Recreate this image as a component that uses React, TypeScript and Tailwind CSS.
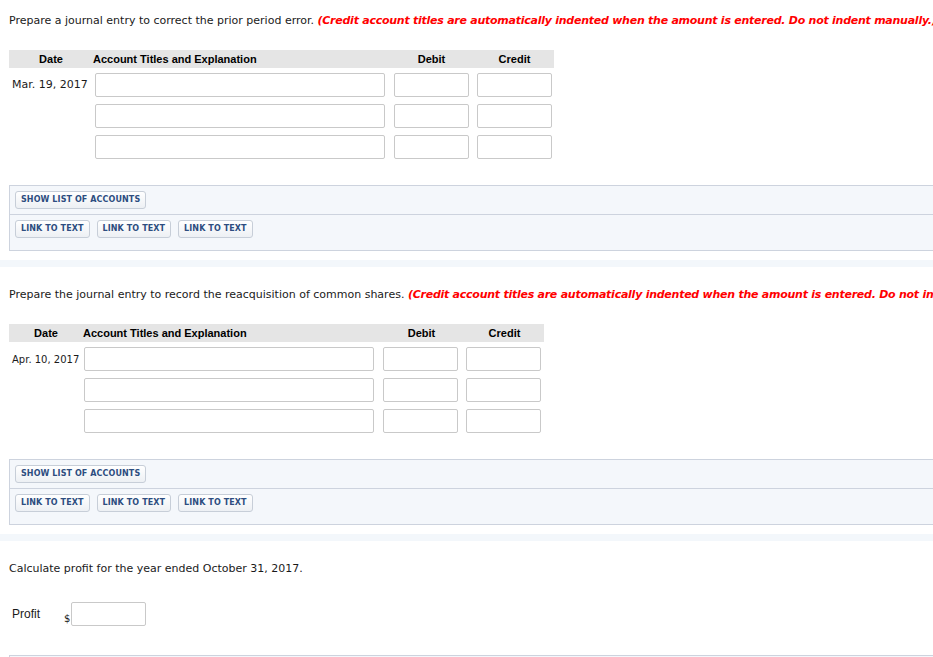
import React from "react";

const Btn = ({ children }: { children: React.ReactNode }) => (
  <button className="h-[18px] px-[5px] rounded-[3px] border border-[#c7ced8] bg-gradient-to-b from-white to-[#edf0f4] text-[8px] font-bold text-[#2d4d80] leading-none font-['DejaVu_Sans',sans-serif] whitespace-nowrap tracking-[0.1px]">
    {children}
  </button>
);

const Field = ({ w }: { w: string }) => (
  <div className={`${w} h-[24px] border border-[#c9c9c9] rounded-[2px] bg-white shrink-0`} />
);

const Journal = ({
  date,
  dateW,
  gapA,
  hdrW,
  dateSize,
}: {
  date: string;
  dateW: string;
  gapA: string;
  hdrW: string;
  dateSize: string;
}) => (
  <div className="ml-[9px]">
    <div className={`${hdrW} h-[18px] bg-[#e5e5e5] flex items-center font-bold text-[11px] text-black font-['Liberation_Sans',sans-serif]`}>
      <div className={`${dateW} text-center shrink-0`}>Date</div>
      <div className="w-[292px] shrink-0">Account Titles and Explanation</div>
      <div className="w-[84px] pl-[9px] shrink-0">
        <div className="w-[75px] text-center">Debit</div>
      </div>
      <div className="w-[83px] pl-[8px] shrink-0">
        <div className="w-[75px] text-center">Credit</div>
      </div>
    </div>
    <div className="flex flex-col gap-[7px] mt-[5px]">
      {[0, 1, 2].map((i) => (
        <div key={i} className="flex items-center">
          <div className={`${dateW} ${dateSize} shrink-0 pl-[3px] whitespace-nowrap`}>{i === 0 ? date : ""}</div>
          <div className={gapA} />
          <Field w="w-[290px]" />
          <div className="w-[9px] shrink-0" />
          <Field w="w-[75px]" />
          <div className="w-[8px] shrink-0" />
          <Field w="w-[75px]" />
        </div>
      ))}
    </div>
  </div>
);

const Panel = () => (
  <div className="ml-[9px] border-y border-l border-[#cdd3de] bg-[#f4f7fb]">
    <div className="h-[29px] pt-[5px] pl-[5px] border-b border-[#cdd3de]">
      <Btn>SHOW LIST OF ACCOUNTS</Btn>
    </div>
    <div className="h-[35px] pt-[5px] pl-[5px] flex gap-[7px]">
      <Btn>LINK TO TEXT</Btn>
      <Btn>LINK TO TEXT</Btn>
      <Btn>LINK TO TEXT</Btn>
    </div>
  </div>
);

export default function App() {
  return (
    <div className="w-[933px] h-[657px] overflow-hidden bg-white font-['DejaVu_Sans',sans-serif] text-[11px] text-[#1a1a1a]">
      <div className="pt-[14px] pl-[9px] whitespace-nowrap h-[50px] leading-[14px]">
        Prepare a journal entry to correct the prior period error.{" "}
        <span className="text-[#ff0000] font-bold italic tracking-[-0.25px]">
          (Credit account titles are automatically indented when the amount is entered. Do not indent manually.)
        </span>
      </div>
      <Journal date="Mar. 19, 2017" dateW="w-[84px]" gapA="w-[2px]" hdrW="w-[545px]" dateSize="text-[11px]" />
      <div className="h-[26px]" />
      <Panel />
      <div className="h-[9px]" />
      <div className="h-[7px] bg-[#f3f7fb]" />
      <div className="pt-[21px] pl-[9px] whitespace-nowrap h-[57px] leading-[14px]">
        Prepare the journal entry to record the reacquisition of common shares.{" "}
        <span className="text-[#ff0000] font-bold italic tracking-[-0.25px]">
          (Credit account titles are automatically indented when the amount is entered. Do not indent manually.)
        </span>
      </div>
      <Journal date="Apr. 10, 2017" dateW="w-[74px]" gapA="w-[1px]" hdrW="w-[535px]" dateSize="text-[10px]" />
      <div className="h-[26px]" />
      <Panel />
      <div className="h-[9px]" />
      <div className="h-[7px] bg-[#f3f7fb]" />
      <div className="pt-[21px] pl-[9px] whitespace-nowrap leading-[14px]">
        Calculate profit for the year ended October 31, 2017.
      </div>
      <div className="mt-[26px] pl-[12px] flex items-start h-[30px]">
        <div className="w-[52px] pt-[3px] font-['Liberation_Sans',sans-serif] text-[12px]">Profit</div>
        <div className="pt-[12px] text-[10px] leading-none">$</div>
        <div className="ml-[1px] w-[75px] h-[24px] border border-[#c9c9c9] rounded-[2px]" />
      </div>
      <div className="mt-[23px] ml-[9px] h-[10px] border-t border-l border-[#cdd3de] bg-[#f4f7fb]" />
    </div>
  );
}
